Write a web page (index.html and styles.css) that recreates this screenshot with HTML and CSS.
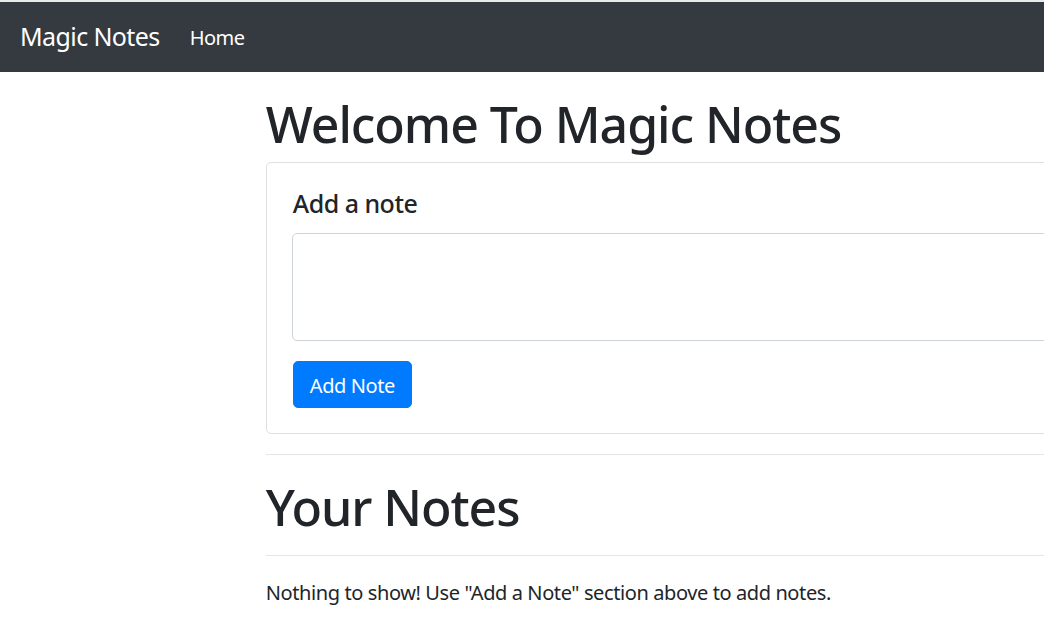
FILE: index.html
```html
<!DOCTYPE html>
<html lang="en">
<head>
<meta charset="utf-8">
<title>Magic Notes</title>
<link rel="stylesheet" href="styles.css">
</head>
<body>
<div class="topstrip"></div>
<nav class="navbar">
  <a class="brand" href="#">Magic Notes</a>
  <ul class="nav">
    <li><a class="nav-link" href="#">Home</a></li>
  </ul>
</nav>
<main class="container">
  <h1 class="title">Welcome To Magic Notes</h1>
  <section class="card">
    <div class="card-body">
      <h5 class="card-title">Add a note</h5>
      <div class="form-group">
        <textarea class="form-control" rows="3"></textarea>
      </div>
      <button class="btn" type="button">Add Note</button>
    </div>
  </section>
  <hr class="rule">
  <h1 class="title">Your Notes</h1>
  <hr class="rule">
  <div class="notes">Nothing to show! Use "Add a Note" section above to add notes.</div>
</main>
</body>
</html>
```
FILE: styles.css
```css
* { box-sizing: border-box; }
html, body { margin: 0; padding: 0; }
body {
  font-family: "Noto Sans", "Open Sans", sans-serif;
  font-size: 20px;
  line-height: 1.5;
  color: #212529;
  background: #fff;
  overflow: hidden;
  width: 1044px;
  height: 621px;
}
.topstrip { height: 2px; background: #e9e9e9; }
.navbar {
  display: flex;
  align-items: center;
  height: 70px;
  padding: 10px 20px;
  background: #343a40;
}
.brand {
  color: #fff;
  text-decoration: none;
  font-size: 25px;
  line-height: 37.5px;
  margin-right: 20px;
  letter-spacing: -0.6px;
}
.nav { list-style: none; margin: 0; padding: 0; display: flex; }
.nav-link {
  display: block;
  color: #fff;
  text-decoration: none;
  padding: 11px 10px 9px;
  font-size: 20px;
  line-height: 30px;
  letter-spacing: -0.5px;
}
.container {
  margin-left: 247px;
  width: 1200px;
  padding: 20px 18.75px 0;
}
.title {
  font-size: 50px;
  font-weight: 500;
  line-height: 56px;
  padding-top: 4px;
  margin: 0 0 10px;
  letter-spacing: -1.05px;
}
.card {
  border: 1px solid #dfdfdf;
  border-radius: 5px;
}
.card-body { padding: 25px; }
.card-title {
  font-size: 25px;
  font-weight: 500;
  line-height: 30px;
  margin: 0 0 15px 1px;
  letter-spacing: -0.5px;
}
.form-group { margin-bottom: 20px; }
.form-control {
  display: block;
  width: 100%;
  height: 108px;
  padding: 7.5px 15px;
  border: 1px solid #ced4da;
  border-radius: 5px;
  font: inherit;
  resize: none;
}
.btn {
  font: inherit;
  font-size: 20px;
  line-height: 30px;
  color: #fff;
  background: #007bff;
  border: 1px solid #007bff;
  border-radius: 5px;
  margin-left: 1px;
  padding: 8.5px 16px 6.5px;
  height: 47px;
  letter-spacing: -0.4px;
}
.rule {
  border: 0;
  border-top: 1px solid #e5e5e5;
  margin: 20px 0;
}
.notes { line-height: 30px; padding-top: 2px; letter-spacing: -0.4px; }
```
